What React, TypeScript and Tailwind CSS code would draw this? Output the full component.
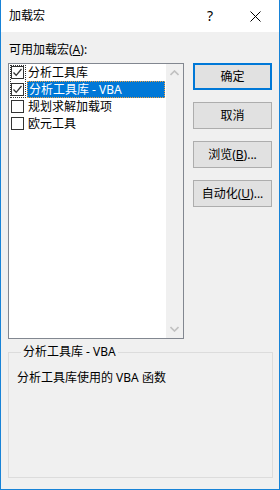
import React from "react";

const font = { fontFamily: '"Noto Sans", "Noto Sans CJK SC", sans-serif' };

function Check({ checked }: { checked: boolean }) {
  return (
    <div className="w-[13px] h-[13px] border border-[#333333] bg-white flex items-center justify-center shrink-0">
      {checked && (
        <svg width="11" height="11" viewBox="0 0 11 11">
          <path d="M1.5 5.5 L4.2 8.3 L9.5 2" fill="none" stroke="#333333" strokeWidth="1.3" />
        </svg>
      )}
    </div>
  );
}

const items = [
  { label: "分析工具库", checked: true, selected: false },
  { label: "分析工具库 - VBA", checked: true, selected: true },
  { label: "规划求解加载项", checked: false, selected: false },
  { label: "欧元工具", checked: false, selected: false },
];

function Btn({ children, def }: { children: React.ReactNode; def?: boolean }) {
  return (
    <div
      className={
        "w-[79px] h-[27px] bg-[#e1e1e1] flex items-center justify-center text-[12px] text-black " +
        (def ? "border-2 border-[#0078d7]" : "border border-[#adadad]")
      }
    >
      {children}
    </div>
  );
}

export default function App() {
  return (
    <div
      className="w-[280px] h-[490px] bg-[#f0f0f0] border-x border-b border-[#1883d7] flex flex-col text-[12px] text-black"
      style={font}
    >
      <div className="h-[32px] bg-white flex items-center shrink-0 relative">
        <span className="ml-[8px] text-[12px]">加载宏</span>
        <span className="absolute left-[206px] top-[7px] text-[14px] leading-[18px]">?</span>
        <svg className="absolute left-[249px] top-[11px]" width="11" height="11" viewBox="0 0 11 11">
          <path d="M0.5 0.5 L10.5 10.5 M10.5 0.5 L0.5 10.5" stroke="#000" strokeWidth="1" />
        </svg>
      </div>
      <div className="flex flex-col pl-[7px] pt-[8px]">
        <div className="flex">
          <div className="flex flex-col w-[176px]">
            <div className="h-[20px] leading-[20px] pl-[1px]">
              可用加载宏(<span className="underline">A</span>):
            </div>
            <div className="mt-[3px] h-[276px] border border-[#828790] bg-white flex relative">
              <div className="flex-1 flex flex-col pt-[0px]">
                {items.map((it, i) => (
                  <div key={i} className="h-[17px] flex items-center">
                    <div className="ml-[2px]">
                      <Check checked={it.checked} />
                    </div>
                    <div
                      className={
                        "ml-[3px] h-[17px] flex items-center pl-[1px] " +
                        (it.selected
                          ? "bg-[#0078d7] text-white w-[138px] border border-dotted border-[#f0a040]"
                          : "")
                      }
                    >
                      {it.label}
                    </div>
                  </div>
                ))}
              </div>
              <div className="w-[17px] bg-[#f0f0f0] flex flex-col items-center justify-between py-[6px]">
                <svg width="9" height="6" viewBox="0 0 9 6">
                  <path d="M0.5 5 L4.5 1 L8.5 5" fill="none" stroke="#c0c0c0" strokeWidth="1.6" />
                </svg>
                <svg width="9" height="6" viewBox="0 0 9 6">
                  <path d="M0.5 1 L4.5 5 L8.5 1" fill="none" stroke="#c0c0c0" strokeWidth="1.6" />
                </svg>
              </div>
              <div className="absolute left-[1px] top-[1px] w-[16px] h-[33px] border border-dotted border-[#333] pointer-events-none" />
            </div>
          </div>
          <div className="ml-[9px] pt-[23px] flex flex-col gap-[12px]">
            <Btn def>确定</Btn>
            <Btn>取消</Btn>
            <Btn>
              浏览(<span className="underline">B</span>)...
            </Btn>
            <Btn>
              自动化(<span className="underline">U</span>)...
            </Btn>
          </div>
        </div>
        <fieldset className="mt-[5px] w-[265px] h-[134px] border border-[#dcdcdc] pl-[8px]">
          <legend className="ml-[4px] px-[2px] leading-[16px]">分析工具库 - VBA</legend>
          <div className="mt-[10px] leading-[16px]">分析工具库使用的 VBA 函数</div>
        </fieldset>
      </div>
    </div>
  );
}
